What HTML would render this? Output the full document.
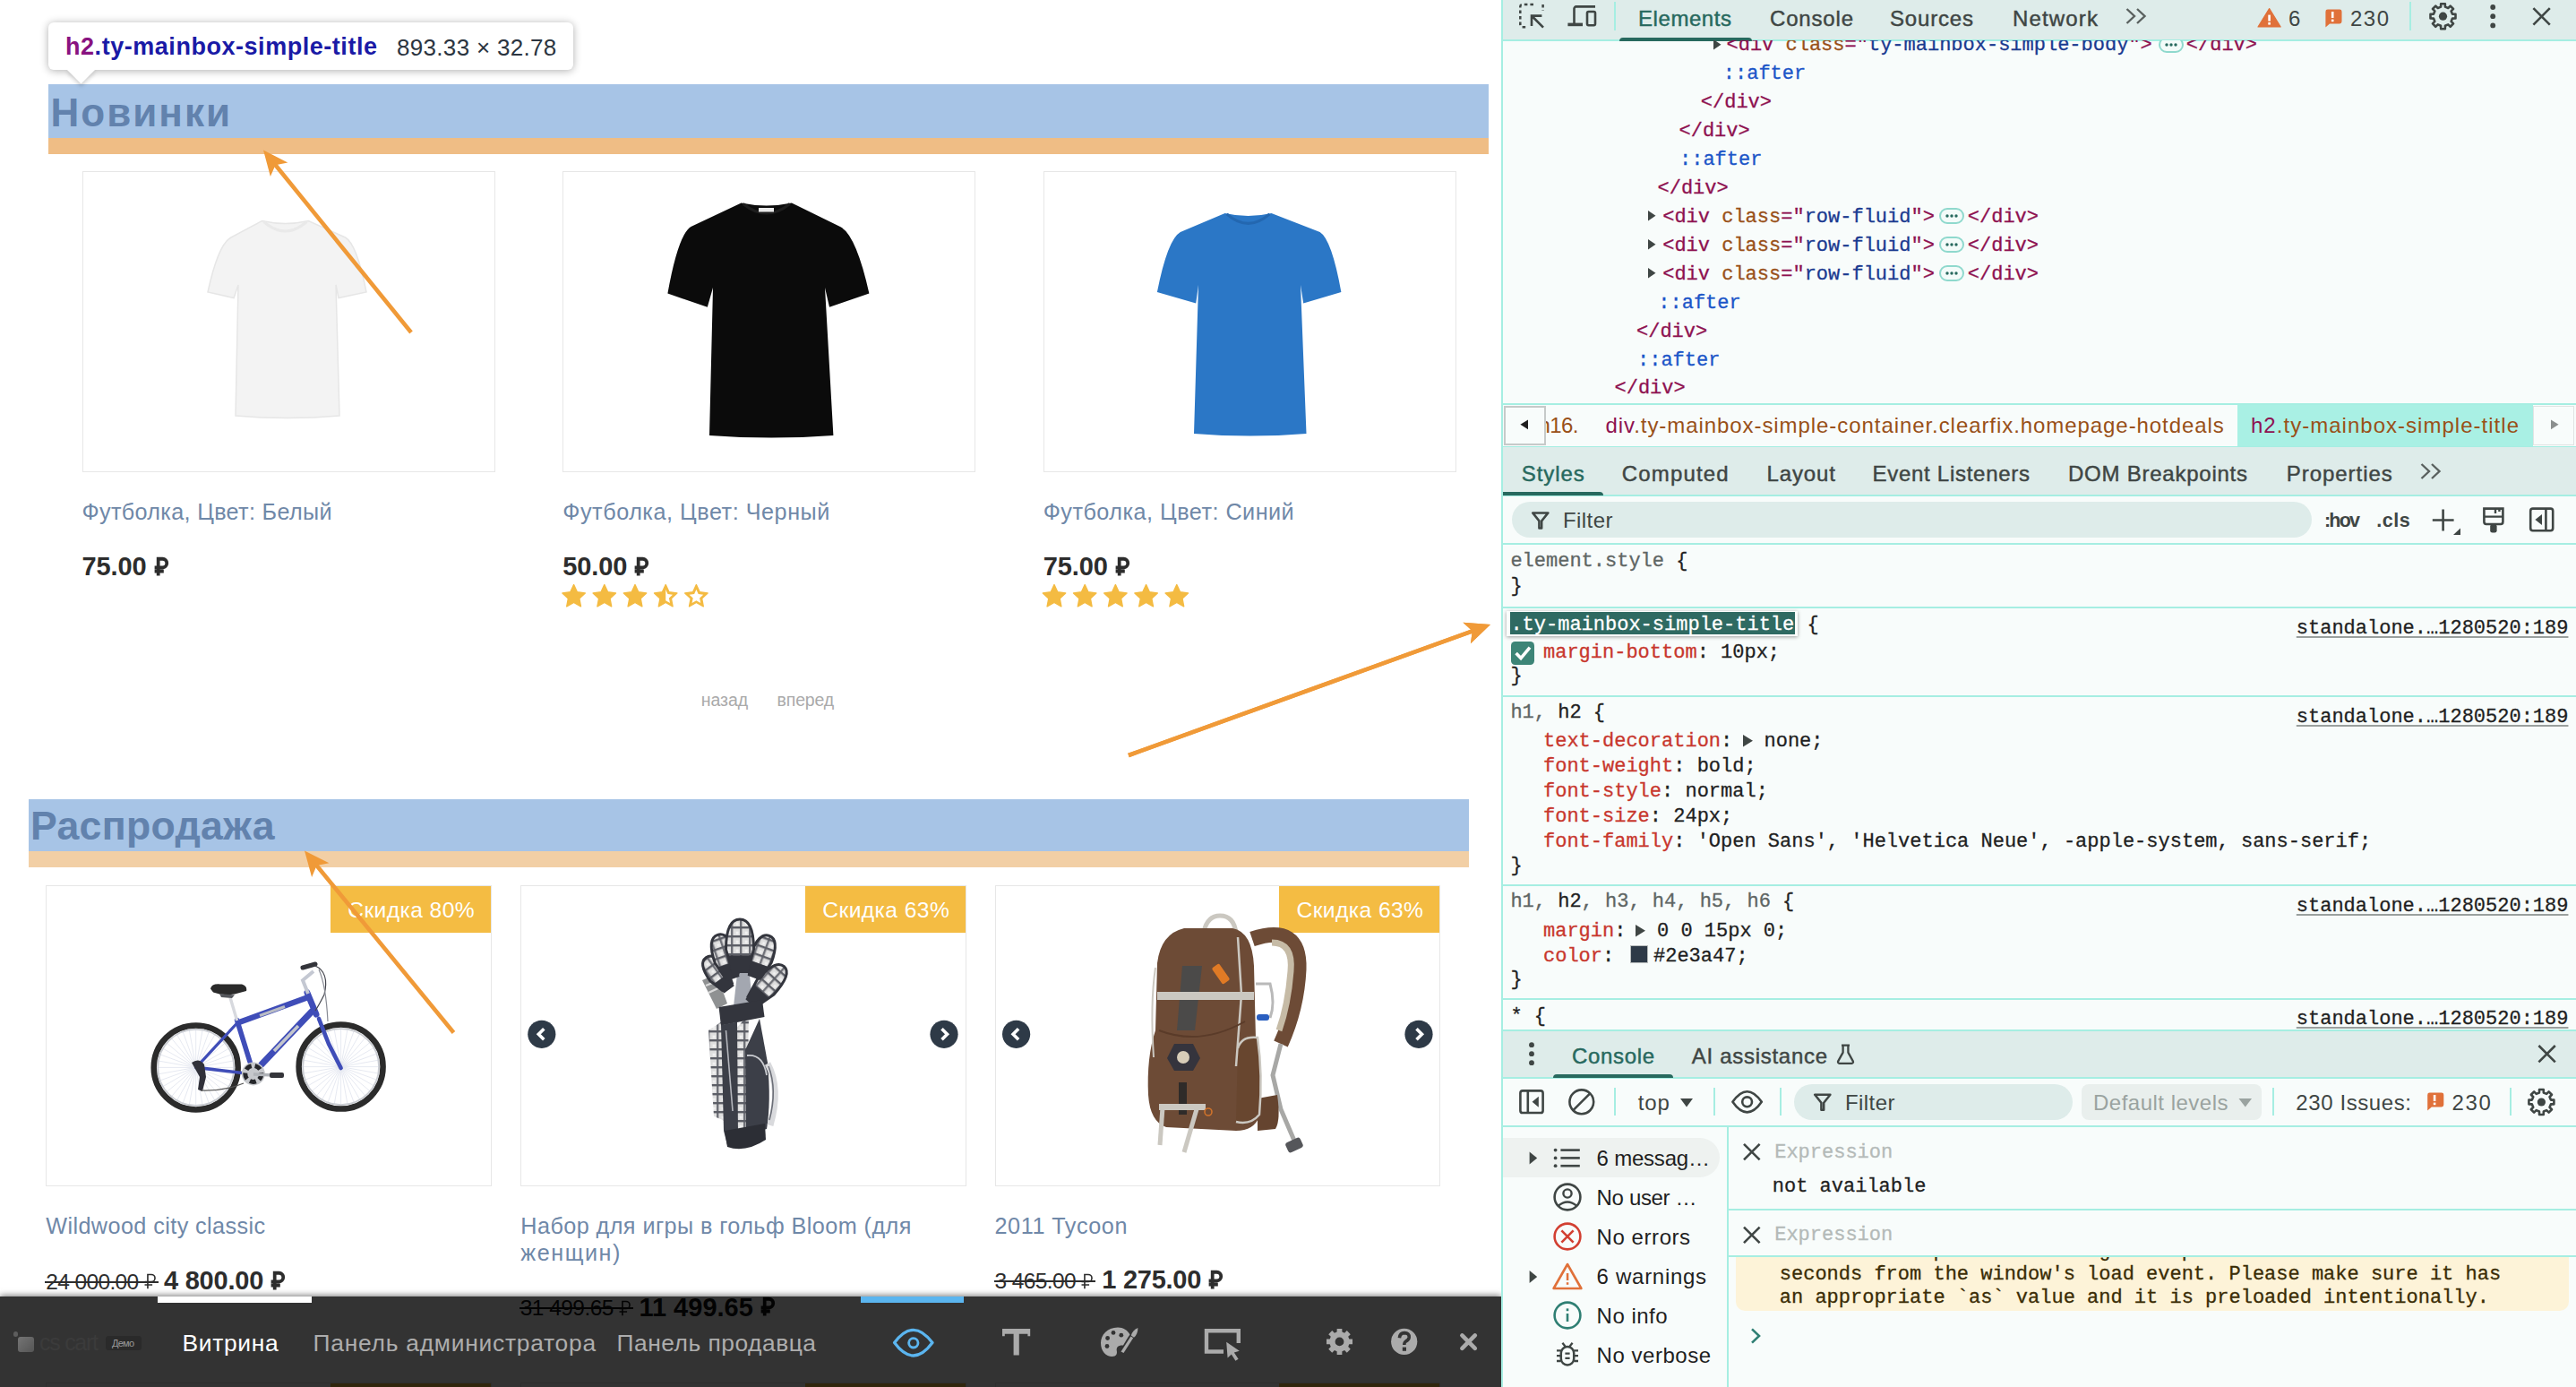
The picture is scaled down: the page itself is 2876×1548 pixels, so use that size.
<!DOCTYPE html>
<html><head><meta charset="utf-8"><title>page</title><style>html,body{margin:0;padding:0;background:#fff;}body{width:2876px;height:1548px;position:relative;overflow:hidden;font-family:"Liberation Sans",sans-serif;}.t{position:absolute;white-space:pre;font-weight:400}.s{font-family:"Liberation Sans",sans-serif}.m{font-family:"Liberation Mono",monospace;-webkit-text-stroke:0.3px}</style></head><body><div style="position:absolute;left:54.00px;top:94.00px;width:1608.00px;height:60.00px;background:#a7c4e6;"></div><div style="position:absolute;left:54.00px;top:154.00px;width:1608.00px;height:18.00px;background:#efbd85;"></div><span id="t1" class="t s" style="left:56.50px;top:96.85px;line-height:57px;font-size:44.00px;font-weight:700;color:#6282ad;letter-spacing:2.016px;">Новинки</span><div style="position:absolute;left:91.5px;top:191px;width:461px;height:336px;border:1.5px solid #e7e7e7;box-sizing:border-box"></div><div style="position:absolute;left:628.3px;top:191px;width:461px;height:336px;border:1.5px solid #e7e7e7;box-sizing:border-box"></div><div style="position:absolute;left:1164.7px;top:191px;width:461px;height:336px;border:1.5px solid #e7e7e7;box-sizing:border-box"></div><span id="t2" class="t s" style="left:91.50px;top:555.17px;line-height:33px;font-size:25.20px;color:#6f88a8;letter-spacing:0.328px;">Футболка, Цвет: Белый</span><span id="t3" class="t s" style="left:628.30px;top:555.17px;line-height:33px;font-size:25.20px;color:#6f88a8;letter-spacing:0.535px;">Футболка, Цвет: Черный</span><span id="t4" class="t s" style="left:1164.70px;top:555.17px;line-height:33px;font-size:25.20px;color:#6f88a8;letter-spacing:0.491px;">Футболка, Цвет: Синий</span><span id="t5" class="t s" style="left:91.50px;top:612.95px;line-height:38px;font-size:29.00px;font-weight:700;color:#2d2d2d;letter-spacing:-0.106px;">75.00 <svg width="15.9" height="20.4" viewBox="0 0 15.6 20" style="display:inline-block;vertical-align:baseline;overflow:visible"><path d="M4.6 20 V1.7 H9.3 a4.7 4.7 0 0 1 0 9.4 H0.6 M0.6 15.2 H10.6" fill="none" stroke="#2d2d2d" stroke-width="3.7"/></svg></span><span id="t6" class="t s" style="left:628.30px;top:612.95px;line-height:38px;font-size:29.00px;font-weight:700;color:#2d2d2d;letter-spacing:-0.106px;">50.00 <svg width="15.9" height="20.4" viewBox="0 0 15.6 20" style="display:inline-block;vertical-align:baseline;overflow:visible"><path d="M4.6 20 V1.7 H9.3 a4.7 4.7 0 0 1 0 9.4 H0.6 M0.6 15.2 H10.6" fill="none" stroke="#2d2d2d" stroke-width="3.7"/></svg></span><span id="t7" class="t s" style="left:1164.70px;top:612.95px;line-height:38px;font-size:29.00px;font-weight:700;color:#2d2d2d;letter-spacing:-0.106px;">75.00 <svg width="15.9" height="20.4" viewBox="0 0 15.6 20" style="display:inline-block;vertical-align:baseline;overflow:visible"><path d="M4.6 20 V1.7 H9.3 a4.7 4.7 0 0 1 0 9.4 H0.6 M0.6 15.2 H10.6" fill="none" stroke="#2d2d2d" stroke-width="3.7"/></svg></span><span id="t8" class="t s" style="left:782.70px;top:769.24px;line-height:25px;font-size:19.50px;color:#aaaaaa;letter-spacing:-0.016px;">назад</span><span id="t9" class="t s" style="left:867.50px;top:769.24px;line-height:25px;font-size:19.50px;color:#aaaaaa;letter-spacing:-0.141px;">вперед</span><div style="position:absolute;left:32.00px;top:892.00px;width:1608.00px;height:57.50px;background:#a7c4e6;"></div><div style="position:absolute;left:32.00px;top:949.50px;width:1608.00px;height:18.00px;background:#f2cfa5;"></div><span id="t10" class="t s" style="left:34.00px;top:892.85px;line-height:58px;font-size:44.60px;font-weight:700;color:#6282ad;letter-spacing:0.316px;">Распродажа</span><div style="position:absolute;left:51.2px;top:988px;width:497.5px;height:335.5px;border:1.5px solid #e7e7e7;box-sizing:border-box"></div><div style="position:absolute;left:368.90px;top:989.30px;width:179.30px;height:51.50px;background:#f4bc43;"></div><div style="position:absolute;left:581.3px;top:988px;width:497.5px;height:335.5px;border:1.5px solid #e7e7e7;box-sizing:border-box"></div><div style="position:absolute;left:899.00px;top:989.30px;width:179.30px;height:51.50px;background:#f4bc43;"></div><div style="position:absolute;left:1110.5px;top:988px;width:497.5px;height:335.5px;border:1.5px solid #e7e7e7;box-sizing:border-box"></div><div style="position:absolute;left:1428.20px;top:989.30px;width:179.30px;height:51.50px;background:#f4bc43;"></div><span id="t11" class="t s" style="left:388.20px;top:999.78px;line-height:32px;font-size:24.60px;color:#ffffff;letter-spacing:0.427px;">Скидка 80%</span><span id="t12" class="t s" style="left:918.30px;top:999.78px;line-height:32px;font-size:24.60px;color:#ffffff;letter-spacing:0.427px;">Скидка 63%</span><span id="t13" class="t s" style="left:1447.50px;top:999.78px;line-height:32px;font-size:24.60px;color:#ffffff;letter-spacing:0.427px;">Скидка 63%</span><span id="t14" class="t s" style="left:51.20px;top:1352.27px;line-height:33px;font-size:25.20px;color:#6f88a8;letter-spacing:0.423px;">Wildwood city classic</span><span id="t15" class="t s" style="left:581.30px;top:1352.27px;line-height:33px;font-size:25.20px;color:#6f88a8;letter-spacing:0.442px;">Набор для игры в гольф Bloom (для</span><span id="t16" class="t s" style="left:581.30px;top:1382.27px;line-height:33px;font-size:25.20px;color:#6f88a8;letter-spacing:1.523px;">женщин)</span><span id="t17" class="t s" style="left:1110.50px;top:1352.27px;line-height:33px;font-size:25.20px;color:#6f88a8;letter-spacing:0.608px;">2011 Tycoon</span><span id="t18" class="t s" style="left:51.30px;top:1414.51px;line-height:32px;font-size:24.50px;color:#2d2d2d;letter-spacing:-0.634px;">24 000.00 <svg width="13.4" height="17.2" viewBox="0 0 15.6 20" style="display:inline-block;vertical-align:baseline;overflow:visible"><path d="M4.6 20 V1.7 H9.3 a4.7 4.7 0 0 1 0 9.4 H0.6 M0.6 15.2 H10.6" fill="none" stroke="#2d2d2d" stroke-width="1.9"/></svg></span><div style="position:absolute;left:50.30px;top:1429.70px;width:126.50px;height:2.00px;background:#2d2d2d;"></div><span id="t19" class="t s" style="left:183.00px;top:1409.95px;line-height:38px;font-size:29.00px;font-weight:700;color:#2d2d2d;letter-spacing:-0.230px;">4 800.00 <svg width="15.9" height="20.4" viewBox="0 0 15.6 20" style="display:inline-block;vertical-align:baseline;overflow:visible"><path d="M4.6 20 V1.7 H9.3 a4.7 4.7 0 0 1 0 9.4 H0.6 M0.6 15.2 H10.6" fill="none" stroke="#2d2d2d" stroke-width="3.7"/></svg></span><span id="t20" class="t s" style="left:1110.50px;top:1414.01px;line-height:32px;font-size:24.50px;color:#2d2d2d;letter-spacing:-0.597px;">3 465.00 <svg width="13.4" height="17.2" viewBox="0 0 15.6 20" style="display:inline-block;vertical-align:baseline;overflow:visible"><path d="M4.6 20 V1.7 H9.3 a4.7 4.7 0 0 1 0 9.4 H0.6 M0.6 15.2 H10.6" fill="none" stroke="#2d2d2d" stroke-width="1.9"/></svg></span><div style="position:absolute;left:1109.50px;top:1429.20px;width:113.80px;height:2.00px;background:#2d2d2d;"></div><span id="t21" class="t s" style="left:1230.30px;top:1409.45px;line-height:38px;font-size:29.00px;font-weight:700;color:#2d2d2d;letter-spacing:-0.268px;">1 275.00 <svg width="15.9" height="20.4" viewBox="0 0 15.6 20" style="display:inline-block;vertical-align:baseline;overflow:visible"><path d="M4.6 20 V1.7 H9.3 a4.7 4.7 0 0 1 0 9.4 H0.6 M0.6 15.2 H10.6" fill="none" stroke="#2d2d2d" stroke-width="3.7"/></svg></span><span id="t22" class="t s" style="left:580.80px;top:1444.21px;line-height:32px;font-size:24.50px;color:#111;letter-spacing:-0.556px;">31 499.65 <svg width="13.4" height="17.2" viewBox="0 0 15.6 20" style="display:inline-block;vertical-align:baseline;overflow:visible"><path d="M4.6 20 V1.7 H9.3 a4.7 4.7 0 0 1 0 9.4 H0.6 M0.6 15.2 H10.6" fill="none" stroke="#111" stroke-width="1.9"/></svg></span><div style="position:absolute;left:579.80px;top:1459.40px;width:127.20px;height:2.00px;background:#111;"></div><span id="t23" class="t s" style="left:713.40px;top:1439.65px;line-height:38px;font-size:29.00px;font-weight:700;color:#111;letter-spacing:0.003px;">11 499.65 <svg width="15.9" height="20.4" viewBox="0 0 15.6 20" style="display:inline-block;vertical-align:baseline;overflow:visible"><path d="M4.6 20 V1.7 H9.3 a4.7 4.7 0 0 1 0 9.4 H0.6 M0.6 15.2 H10.6" fill="none" stroke="#111" stroke-width="3.7"/></svg></span><div style="position:absolute;left:51.2px;top:1542.5px;width:497.5px;height:40px;border:1.5px solid #e7e7e7;box-sizing:border-box"></div><div style="position:absolute;left:368.90px;top:1543.50px;width:179.30px;height:10.00px;background:#f4bc43;"></div><div style="position:absolute;left:581.3px;top:1542.5px;width:497.5px;height:40px;border:1.5px solid #e7e7e7;box-sizing:border-box"></div><div style="position:absolute;left:899.00px;top:1543.50px;width:179.30px;height:10.00px;background:#f4bc43;"></div><div style="position:absolute;left:1110.5px;top:1542.5px;width:497.5px;height:40px;border:1.5px solid #e7e7e7;box-sizing:border-box"></div><div style="position:absolute;left:1428.20px;top:1543.50px;width:179.30px;height:10.00px;background:#f4bc43;"></div><svg style="position:absolute;left:0;top:0" width="1676" height="1548" viewBox="0 0 1676 1548"><path d="M292.5,246.5 Q318.4,252.5 344.4,246.5 L385.5,265.0 Q398.4,272.3 409.0,326.0 L378.0,332.5 L375.0,318.0 L379.0,464.0 Q321.0,469.0 263.0,464.0 L266.0,318.0 L261.0,332.5 L232.0,326.0 Q243.7,272.3 258.0,265.0 Z" fill="#f3f3f3" stroke="#e6e6e6" stroke-width="1.5"/><path d="M294.5,247.5 Q318.4,268.5 342.4,247.5" fill="none" stroke="#e9e9e9" stroke-width="3"/><path d="M827.6,226.5 Q855.8,232.5 883.9,226.5 L938.0,253.0 Q955.8,262.0 970.4,327.6 L926.0,342.7 L921.0,321.0 L930.4,486.0 Q861.2,491.0 792.0,486.0 L796.0,321.0 L789.8,342.7 L745.4,327.6 Q757.1,262.0 771.4,253.0 Z" fill="#0b0b0b"/><path d="M829.6,227.5 Q855.8,248.5 881.9,227.5" fill="none" stroke="#1d1d1d" stroke-width="3"/><rect x="847" y="232" width="17" height="4.5" fill="#e9e9e9"/><path d="M1367.6,237.9 Q1393.5,243.9 1419.5,237.9 L1473.6,259.0 Q1486.7,267.0 1497.4,326.0 L1455.2,338.4 L1452.0,318.0 L1458.5,484.0 Q1395.8,489.0 1333.0,484.0 L1338.0,318.0 L1335.2,338.4 L1291.9,326.0 Q1303.6,267.0 1317.9,259.0 Z" fill="#2b77c6"/><path d="M1369.6,238.9 Q1393.5,259.9 1417.5,238.9" fill="none" stroke="#2367b0" stroke-width="3"/><polygon points="640.6,652.6 644.4,660.7 653.3,661.9 646.8,668.0 648.5,676.8 640.6,672.5 632.7,676.8 634.4,668.0 627.9,661.9 636.8,660.7" fill="#f4bb42" stroke="#f4bb42" stroke-width="1.4" stroke-linejoin="round"/><polygon points="674.8,652.6 678.6,660.7 687.5,661.9 681.0,668.0 682.7,676.8 674.8,672.5 666.9,676.8 668.6,668.0 662.1,661.9 671.0,660.7" fill="#f4bb42" stroke="#f4bb42" stroke-width="1.4" stroke-linejoin="round"/><polygon points="709.0,652.6 712.8,660.7 721.7,661.9 715.2,668.0 716.9,676.8 709.0,672.5 701.1,676.8 702.8,668.0 696.3,661.9 705.2,660.7" fill="#f4bb42" stroke="#f4bb42" stroke-width="1.4" stroke-linejoin="round"/><polygon points="743.2,652.6 747.0,660.7 755.9,661.9 749.4,668.0 751.1,676.8 743.2,672.5 735.3,676.8 737.0,668.0 730.5,661.9 739.4,660.7" fill="#f4bb42" stroke="#f4bb42" stroke-width="1.4" stroke-linejoin="round"/><polygon points="743.2,658.1 745.5,663.1 751.0,663.8 746.9,667.5 748.0,672.9 743.2,670.2 738.4,672.9 739.5,667.5 735.4,663.8 740.9,663.1" fill="#fff"/><clipPath id="hc743"><rect x="730.2" y="651.0" width="13" height="30"/></clipPath><polygon points="743.2,652.6 747.0,660.7 755.9,661.9 749.4,668.0 751.1,676.8 743.2,672.5 735.3,676.8 737.0,668.0 730.5,661.9 739.4,660.7" fill="#f4bb42" clip-path="url(#hc743)"/><polygon points="777.4,652.6 781.2,660.7 790.1,661.9 783.6,668.0 785.3,676.8 777.4,672.5 769.5,676.8 771.2,668.0 764.7,661.9 773.6,660.7" fill="#f4bb42" stroke="#f4bb42" stroke-width="1.4" stroke-linejoin="round"/><polygon points="777.4,658.1 779.7,663.1 785.2,663.8 781.1,667.5 782.2,672.9 777.4,670.2 772.6,672.9 773.7,667.5 769.6,663.8 775.1,663.1" fill="#fff"/><polygon points="1177.0,652.6 1180.8,660.7 1189.7,661.9 1183.2,668.0 1184.9,676.8 1177.0,672.5 1169.1,676.8 1170.8,668.0 1164.3,661.9 1173.2,660.7" fill="#f4bb42" stroke="#f4bb42" stroke-width="1.4" stroke-linejoin="round"/><polygon points="1211.2,652.6 1215.0,660.7 1223.9,661.9 1217.4,668.0 1219.1,676.8 1211.2,672.5 1203.3,676.8 1205.0,668.0 1198.5,661.9 1207.4,660.7" fill="#f4bb42" stroke="#f4bb42" stroke-width="1.4" stroke-linejoin="round"/><polygon points="1245.4,652.6 1249.2,660.7 1258.1,661.9 1251.6,668.0 1253.3,676.8 1245.4,672.5 1237.5,676.8 1239.2,668.0 1232.7,661.9 1241.6,660.7" fill="#f4bb42" stroke="#f4bb42" stroke-width="1.4" stroke-linejoin="round"/><polygon points="1279.6,652.6 1283.4,660.7 1292.3,661.9 1285.8,668.0 1287.5,676.8 1279.6,672.5 1271.7,676.8 1273.4,668.0 1266.9,661.9 1275.8,660.7" fill="#f4bb42" stroke="#f4bb42" stroke-width="1.4" stroke-linejoin="round"/><polygon points="1313.8,652.6 1317.6,660.7 1326.5,661.9 1320.0,668.0 1321.7,676.8 1313.8,672.5 1305.9,676.8 1307.6,668.0 1301.1,661.9 1310.0,660.7" fill="#f4bb42" stroke="#f4bb42" stroke-width="1.4" stroke-linejoin="round"/><path d="M260.7,1191.4 L176.7,1191.4 M260.1,1198.7 L177.3,1184.1 M258.2,1205.8 L179.2,1177.0 M255.1,1212.4 L182.3,1170.4 M250.9,1218.4 L186.5,1164.4 M245.7,1223.6 L191.7,1159.2 M239.7,1227.8 L197.7,1155.0 M233.1,1230.9 L204.3,1151.9 M226.0,1232.8 L211.4,1150.0 M218.7,1233.4 L218.7,1149.4 M211.4,1232.8 L226.0,1150.0 M204.3,1230.9 L233.1,1151.9 M197.7,1227.8 L239.7,1155.0 M191.7,1223.6 L245.7,1159.2 M186.5,1218.4 L250.9,1164.4 M182.3,1212.4 L255.1,1170.4 M179.2,1205.8 L258.2,1177.0 M177.3,1198.7 L260.1,1184.1 " stroke="#dfe3ee" stroke-width="0.8" fill="none"/><circle cx="218.7" cy="1191.4" r="47" fill="none" stroke="#2b2b2b" stroke-width="6.5"/><circle cx="218.7" cy="1191.4" r="42.5" fill="none" stroke="#c9ccd2" stroke-width="1.8"/><path d="M422.6,1190.6 L338.6,1190.6 M422.0,1197.9 L339.2,1183.3 M420.1,1205.0 L341.1,1176.2 M417.0,1211.6 L344.2,1169.6 M412.8,1217.6 L348.4,1163.6 M407.6,1222.8 L353.6,1158.4 M401.6,1227.0 L359.6,1154.2 M395.0,1230.1 L366.2,1151.1 M387.9,1232.0 L373.3,1149.2 M380.6,1232.6 L380.6,1148.6 M373.3,1232.0 L387.9,1149.2 M366.2,1230.1 L395.0,1151.1 M359.6,1227.0 L401.6,1154.2 M353.6,1222.8 L407.6,1158.4 M348.4,1217.6 L412.8,1163.6 M344.2,1211.6 L417.0,1169.6 M341.1,1205.0 L420.1,1176.2 M339.2,1197.9 L422.0,1183.3 " stroke="#dfe3ee" stroke-width="0.8" fill="none"/><circle cx="380.6" cy="1190.6" r="47" fill="none" stroke="#2b2b2b" stroke-width="6.5"/><circle cx="380.6" cy="1190.6" r="42.5" fill="none" stroke="#c9ccd2" stroke-width="1.8"/><g stroke="#3f4db8" stroke-width="4.6" stroke-linecap="round" fill="none"><path d="M264.6,1138.6 L279,1185" stroke-width="5.6"/><path d="M267,1141 L344,1113" stroke-width="6.2"/><path d="M348,1129 L292,1188" stroke-width="7.2"/><path d="M343,1108 L353,1132" stroke-width="7"/><path d="M356,1137 L367,1165 L380.6,1192" /><path d="M283,1199 L219,1191.4" stroke-width="3.6"/><path d="M264.6,1142 L219,1191.4" stroke-width="3.2"/></g><path d="M290,1133.5 L318,1123.5" stroke="#b9bcc4" stroke-width="3.4"/><path d="M333,1145 L306,1173" stroke="#c3c6cd" stroke-width="3.6"/><path d="M256,1110 L264.6,1139" stroke="#d7d9de" stroke-width="3.4"/><path d="M235,1103.5 Q236,1097.6 246,1098.4 L270,1098.6 Q276.4,1100.6 275,1106 L262,1109.6 Q248,1111.4 238,1107.6 Z" fill="#2a2a2a"/><path d="M245,1109 L262,1110.5 L259,1114 L247,1113 Z" fill="#55575c"/><path d="M344,1109 L338,1094 L350,1084" stroke="#c4c8d2" stroke-width="4" fill="none"/><path d="M338,1080 L352,1076" stroke="#33343a" stroke-width="5" stroke-linecap="round"/><path d="M352,1078 Q368,1085 362,1110 Q356,1122 352,1128" stroke="#44464e" stroke-width="1.2" fill="none"/><path d="M356,1082 Q364,1100 366,1140" stroke="#888b94" stroke-width="1.2" fill="none"/><circle cx="282.8" cy="1198.4" r="13" fill="#c6c8cc"/><circle cx="282.8" cy="1198.4" r="9" fill="none" stroke="#26272b" stroke-width="5" stroke-dasharray="7 4"/><path d="M283,1199 L306,1200" stroke="#b0b3b8" stroke-width="3.5"/><rect x="301" y="1197" width="16" height="6" rx="2" fill="#34353a"/><path d="M214,1186 q8,-6 14,2 l2,14 l-4,16 l-5,-2 l2,-14 z" fill="#30313a"/><path d="M224,1217 Q250,1218 272,1209" stroke="#555" stroke-width="1.2" fill="none"/><defs><pattern id="plaid" width="10" height="10" patternUnits="userSpaceOnUse"><rect width="10" height="10" fill="#dedede"/><rect width="10" height="2.4" fill="#5c5e66"/><rect width="2.4" height="10" fill="#5c5e66" opacity=".85"/><rect x="5.6" y="5.6" width="3" height="3" fill="#f1f1f1"/></pattern></defs><path d="M819,1123 L824,1078 L836,1078 L840,1120 Z" fill="#a3a7b0"/><path d="M836,1120 L846,1088 L856,1092 L848,1120 Z" fill="#e6e6e6"/><path d="M784,1094 L800,1087 L812,1120 L800,1126 Z" fill="#8f9192"/><path d="M788,1100 L803,1094 M791,1108 L806,1101" stroke="#d9d9d9" stroke-width="2.4"/><g transform="translate(800,1085) rotate(-36)"><path d="M-11.5,4 Q-11.5,-20 0,-20 Q11.5,-20 11.5,4 L6.9,20 L-6.9,20 Z" fill="url(#plaid)" stroke="#33353d" stroke-width="3"/><path d="M-9.66,8.8 L9.66,8.8 L6.9,24 L-6.9,24 Z" fill="#33353d"/></g><g transform="translate(809,1066) rotate(-19)"><path d="M-13,4.8 Q-13,-24 0,-24 Q13,-24 13,4.8 L7.8,24 L-7.8,24 Z" fill="url(#plaid)" stroke="#33353d" stroke-width="3"/><path d="M-10.92,10.56 L10.92,10.56 L7.8,28 L-7.8,28 Z" fill="#33353d"/></g><g transform="translate(858,1098) rotate(42)"><path d="M-12.5,5.2 Q-12.5,-26 0,-26 Q12.5,-26 12.5,5.2 L7.5,26 L-7.5,26 Z" fill="url(#plaid)" stroke="#33353d" stroke-width="3"/><path d="M-10.5,11.44 L10.5,11.44 L7.5,30 L-7.5,30 Z" fill="#33353d"/></g><g transform="translate(851,1066) rotate(20)"><path d="M-12.5,4.6 Q-12.5,-23 0,-23 Q12.5,-23 12.5,4.6 L7.5,23 L-7.5,23 Z" fill="url(#plaid)" stroke="#33353d" stroke-width="3"/><path d="M-10.5,10.12 L10.5,10.12 L7.5,27 L-7.5,27 Z" fill="#33353d"/></g><g transform="translate(826,1054) rotate(0)"><path d="M-15.5,5.6 Q-15.5,-28 0,-28 Q15.5,-28 15.5,5.6 L9.3,28 L-9.3,28 Z" fill="url(#plaid)" stroke="#33353d" stroke-width="3"/><path d="M-13.02,12.32 L13.02,12.32 L9.3,32 L-9.3,32 Z" fill="#33353d"/></g><path d="M791,1150 L806,1140 L812,1252 L797,1246 Z" fill="url(#plaid)"/><path d="M820,1150 L836,1132 L834,1264 L820,1262 Z" fill="url(#plaid)"/><path d="M802.5,1124 L851,1116 L853.5,1135 L805,1144.5 Z" fill="#33353d"/><path d="M805,1144 L823,1140.5 L824,1268 L812,1278 L808,1262 Z" fill="#3c3f48"/><path d="M810.5,1150 L818,1240" stroke="#b5b7bd" stroke-width="1.6" fill="none"/><path d="M832,1172 L848,1137 L857,1186 Q861,1230 856,1260 L833,1266 Z" fill="#3c3f48"/><path d="M834,1178 Q852,1176 856,1200" stroke="#c9cbd0" stroke-width="1.8" fill="none"/><path d="M857,1187 Q872,1215 860,1256" stroke="#d9dadd" stroke-width="7" fill="none"/><path d="M858,1190 Q868,1216 859,1250" stroke="#6b6e77" stroke-width="1.6" fill="none"/><path d="M809,1262 L854,1254 L855,1272 Q832,1287 812,1280 Z" fill="#2c2e35"/><path d="M1398,1048 Q1452,1030 1450,1082 Q1448,1125 1430,1165" stroke="#6d4b36" stroke-width="17" fill="none"/><path d="M1420,1052 Q1444,1052 1441,1084 Q1438,1122 1428,1150" stroke="#c6bba6" stroke-width="7" fill="none"/><path d="M1430,1165 L1421,1200 L1430,1238 L1448,1280" stroke="#a8a8a6" stroke-width="5" fill="none"/><rect x="1436" y="1272" width="18" height="12" rx="3" fill="#55565a" transform="rotate(-25 1445 1278)"/><path d="M1404,1226 L1426,1222 Q1430,1250 1424,1260 L1404,1262 Z" fill="#65442f"/><path d="M1344,1040 Q1348,1022 1362,1022 Q1378,1022 1380,1042" stroke="#cbc8c1" stroke-width="5" fill="none"/><path d="M1292,1075 Q1296,1042 1322,1036 L1376,1036 Q1398,1040 1400,1078 L1402,1160 Q1410,1200 1406,1246 Q1400,1262 1380,1262 L1302,1258 Q1284,1252 1282,1222 Q1280,1180 1290,1150 Z" fill="#6d4b36"/><path d="M1382,1170 Q1386,1156 1404,1158 Q1410,1200 1406,1244 Q1396,1256 1380,1252" fill="#68462f" stroke="#cbc8c1" stroke-width="2.5"/><path d="M1382,1046 L1386,1110 L1380,1190" stroke="#cbc8c1" stroke-width="2.5" fill="none"/><path d="M1320,1078 L1342,1078 L1334,1150 L1314,1150 Z" fill="#4b4a49"/><rect x="1292" y="1107" width="108" height="9" fill="#cbc8c1"/><path d="M1294,1150 Q1340,1168 1390,1140" stroke="#5a3b29" stroke-width="2" fill="none"/><rect x="1358" y="1076" width="10" height="22" rx="2" fill="#e07a25" transform="rotate(-35 1363 1087)"/><polygon points="1303,1181 1311,1165 1332,1165 1340,1181 1332,1195 1311,1195" fill="#35343d"/><circle cx="1321" cy="1180" r="7" fill="#d8cdb8"/><rect x="1316" y="1208" width="9" height="36" fill="#2f2b29"/><rect x="1294" y="1232" width="52" height="7" fill="#cbc8c1"/><path d="M1298,1236 L1295,1278" stroke="#cbc8c1" stroke-width="5"/><path d="M1336,1238 L1322,1286" stroke="#cbc8c1" stroke-width="5"/><circle cx="1349" cy="1241" r="4" fill="none" stroke="#d0732b" stroke-width="1.6"/><path d="M1290,1080 Q1284,1120 1288,1180" stroke="#cbc8c1" stroke-width="2" fill="none"/><path d="M1402,1098 L1418,1098 Q1424,1120 1418,1136" stroke="#b9b9b9" stroke-width="3" fill="none"/><rect x="1403" y="1132" width="14" height="7" rx="3" fill="#2a5fc0"/><circle cx="604.8" cy="1154.3" r="15.6" fill="#2e3a47"/><path d="M607.3,1148.3 l-6,6 l6,6" fill="none" stroke="#fff" stroke-width="3.6"/><circle cx="1054.0" cy="1154.3" r="15.6" fill="#2e3a47"/><path d="M1051.5,1148.3 l6,6 l-6,6" fill="none" stroke="#fff" stroke-width="3.6"/><circle cx="1134.6" cy="1154.3" r="15.6" fill="#2e3a47"/><path d="M1137.1,1148.3 l-6,6 l6,6" fill="none" stroke="#fff" stroke-width="3.6"/><circle cx="1584.0" cy="1154.3" r="15.6" fill="#2e3a47"/><path d="M1581.5,1148.3 l6,6 l-6,6" fill="none" stroke="#fff" stroke-width="3.6"/><line x1="459.0" y1="371.0" x2="306.6" y2="183.0" stroke="#f09a38" stroke-width="4.6"/><polygon points="294.0,167.5 321.3,181.4 307.5,184.2 301.9,197.1" fill="#f09a38"/><line x1="1260.0" y1="843.0" x2="1645.2" y2="703.8" stroke="#f09a38" stroke-width="4.6"/><polygon points="1664.0,697.0 1641.9,718.3 1643.8,704.3 1633.4,694.8" fill="#f09a38"/><line x1="506.5" y1="1152.5" x2="352.7" y2="965.0" stroke="#f09a38" stroke-width="4.6"/><polygon points="340.0,949.5 367.4,963.2 353.6,966.1 348.1,979.1" fill="#f09a38"/></svg><div style="position:absolute;left:54px;top:24.5px;width:586px;height:53px;background:#fff;border-radius:6px;box-shadow:0 1px 10px rgba(0,0,0,.32)"></div><svg style="position:absolute;left:74.00px;top:76.50px;overflow:visible;filter:drop-shadow(0 3px 2px rgba(0,0,0,.18));" width="33.00" height="17.00" viewBox="0 0 33 17"><polygon points="0,0 33,0 16.5,16.5" fill="#fff"/></svg><div style="position:absolute;left:70.00px;top:70.00px;width:42.00px;height:7.50px;background:#fff;"></div><span id="t24" class="t s" style="left:73.00px;top:34.74px;line-height:35px;font-size:27.00px;font-weight:700;color:#1a1aa6;letter-spacing:0.537px;"><span style="color:#881280">h2</span>.ty-mainbox-simple-title</span><span id="t25" class="t s" style="left:443.00px;top:35.59px;line-height:34px;font-size:26.00px;color:#2b3440;letter-spacing:0.314px;">893.33 × 32.78</span><div style="position:absolute;left:0;top:1447px;width:1676px;height:101px;background:rgba(0,0,0,.80);box-shadow:0 -1px 7px rgba(0,0,0,.55)"></div><div style="position:absolute;left:176.00px;top:1447.00px;width:172.00px;height:7.20px;background:#ffffff;"></div><div style="position:absolute;left:960.50px;top:1447.00px;width:115.50px;height:7.20px;background:#5bb5ef;"></div><div style="position:absolute;left:19.6px;top:1491.6px;width:18px;height:17.2px;border-radius:3px;background:linear-gradient(135deg,#757575,#555)"></div><div style="position:absolute;left:14.6px;top:1486.2px;width:5.6px;height:5.6px;border-radius:3px;background:#5d5d5d"></div><span id="t26" class="t s" style="left:44.00px;top:1482.34px;line-height:32px;font-size:25.00px;color:#3b3b3b;letter-spacing:-1.271px;">cs cart</span><div style="position:absolute;left:118px;top:1490.8px;width:39.8px;height:16.4px;border-radius:3.5px;background:#2a2a2a"></div><span id="t27" class="t s" style="left:125.00px;top:1492.39px;line-height:14px;font-size:11.00px;color:#9b9b9b;letter-spacing:-0.750px;">Демо</span><span id="t28" class="t s" style="left:203.60px;top:1481.75px;line-height:34px;font-size:26.40px;color:#ffffff;letter-spacing:0.648px;">Витрина</span><span id="t29" class="t s" style="left:349.60px;top:1481.75px;line-height:34px;font-size:26.40px;color:#adadad;letter-spacing:0.741px;">Панель администратора</span><span id="t30" class="t s" style="left:688.50px;top:1481.75px;line-height:34px;font-size:26.40px;color:#adadad;letter-spacing:0.502px;">Панель продавца</span><svg style="position:absolute;left:0;top:0" width="1676" height="1548" viewBox="0 0 1676 1548"><path d="M998.6,1498.6 Q1019.8,1470 1041,1498.6 Q1019.8,1527.4 998.6,1498.6 Z" fill="none" stroke="#5bb5ef" stroke-width="3.3" stroke-linejoin="round"/><circle cx="1019.8" cy="1498.8" r="5.2" fill="none" stroke="#5bb5ef" stroke-width="2.8"/><path d="M1119,1483 H1150.2 V1491.2 H1147.4 V1488.8 H1137.8 V1512.5 H1131.6 V1488.8 H1121.8 V1491.2 H1119 Z" fill="#ababab"/><path d="M1248,1481.5 C1236,1481.5 1229,1490 1229,1499 C1229,1508 1235,1514 1241.5,1514 C1246.5,1514 1247.5,1510.5 1246.8,1507.5 C1246,1503.5 1249,1501.5 1252.5,1501.5 L1254,1501.5 C1256,1498 1259,1493 1261.5,1489.5 C1259,1484.5 1254,1481.5 1248,1481.5 Z" fill="#ababab"/><circle cx="1236.6" cy="1493.5" r="2.4" fill="#333"/><circle cx="1243.0" cy="1487.4" r="2.4" fill="#333"/><circle cx="1251.8" cy="1490.2" r="2.4" fill="#333"/><circle cx="1236.0" cy="1502.5" r="2.4" fill="#333"/><path d="M1251.5,1508.5 L1262.5,1491.5 L1265.2,1493.2 L1254.5,1510 Z" fill="#ababab"/><path d="M1262.8,1490.6 Q1264.5,1484.5 1270.4,1482 Q1270.5,1489 1266,1492.8 Z" fill="#ababab"/><path d="M1366,1508.5 H1347 V1485.2 H1382.8 V1499" fill="none" stroke="#ababab" stroke-width="4.4"/><path d="M1369.2,1497.8 L1383.8,1507.8 L1377.8,1509.4 L1382.6,1516.8 L1379.4,1518.8 L1374.8,1511.4 L1370.6,1515.4 Z" fill="#ababab"/><path d="M1506.32,1494.50 L1510.02,1494.55 L1510.02,1500.25 L1506.32,1500.30 L1505.20,1503.00 L1507.78,1505.66 L1503.76,1509.68 L1501.10,1507.10 L1498.40,1508.22 L1498.35,1511.92 L1492.65,1511.92 L1492.60,1508.22 L1489.90,1507.10 L1487.24,1509.68 L1483.22,1505.66 L1485.80,1503.00 L1484.68,1500.30 L1480.98,1500.25 L1480.98,1494.55 L1484.68,1494.50 L1485.80,1491.80 L1483.22,1489.14 L1487.24,1485.12 L1489.90,1487.70 L1492.60,1486.58 L1492.65,1482.88 L1498.35,1482.88 L1498.40,1486.58 L1501.10,1487.70 L1503.76,1485.12 L1507.78,1489.14 L1505.20,1491.80 Z M1490.60,1497.40 a4.90,4.90 0 1,0 9.80,0 a4.90,4.90 0 1,0 -9.80,0 Z" fill="#ababab" fill-rule="evenodd"/><circle cx="1567.7" cy="1497.4" r="14.6" fill="#ababab"/><path d="M1562.4,1493.2 Q1563,1487.6 1568,1487.6 Q1573.4,1487.8 1573.2,1492.4 Q1573,1495.4 1569.6,1497 Q1567.8,1498 1567.8,1501" fill="none" stroke="#333" stroke-width="3.6"/><rect x="1565.8" y="1503.6" width="4.2" height="4.2" fill="#333"/><path d="M1632.4,1490.4 L1646.8,1504.8 M1646.8,1490.4 L1632.4,1504.8" stroke="#ababab" stroke-width="4.6" stroke-linecap="round"/></svg><div style="position:absolute;left:1676.00px;top:0.00px;width:1200.00px;height:1548.00px;background:#f8fcfb;"></div><div style="position:absolute;left:1678.00px;top:0.00px;width:1198.00px;height:44.60px;background:#deecea;"></div><div style="position:absolute;left:1678.00px;top:43.60px;width:1198.00px;height:2.00px;background:#a6eee2;"></div><div style="position:absolute;left:1802.00px;top:2.00px;width:2.00px;height:31.50px;background:#a6eee2;"></div><span id="t31" class="t s" style="left:1829.00px;top:4.58px;line-height:31px;font-size:24.00px;color:#27695e;letter-spacing:0.565px;-webkit-text-stroke:0.45px #27695e;">Elements</span><div style="position:absolute;left:1808px;top:41.6px;width:147.5px;height:4px;background:#27695e;border-radius:4px 4px 0 0"></div><span id="t32" class="t s" style="left:1976.00px;top:4.58px;line-height:31px;font-size:24.00px;color:#3f4644;letter-spacing:0.823px;-webkit-text-stroke:0.45px #3f4644;">Console</span><span id="t33" class="t s" style="left:2110.00px;top:4.58px;line-height:31px;font-size:24.00px;color:#3f4644;letter-spacing:0.826px;-webkit-text-stroke:0.45px #3f4644;">Sources</span><span id="t34" class="t s" style="left:2247.00px;top:4.58px;line-height:31px;font-size:24.00px;color:#3f4644;letter-spacing:1.161px;-webkit-text-stroke:0.45px #3f4644;">Network</span><svg style="position:absolute;left:2372.50px;top:9.40px;overflow:visible;" width="24.00" height="18.00" viewBox="0 0 24 18"><path d="M1.5,1 L10,9 L1.5,17 M13,1 L21.5,9 L13,17" fill="none" stroke="#5a615f" stroke-width="2.4"/></svg><span id="t35" class="t s" style="left:2555.00px;top:5.38px;line-height:31px;font-size:24.00px;color:#3f4644;letter-spacing:0.641px;">6</span><span id="t36" class="t s" style="left:2624.00px;top:5.38px;line-height:31px;font-size:24.00px;color:#3f4644;letter-spacing:1.477px;">230</span><div style="position:absolute;left:2689.80px;top:2.00px;width:2.00px;height:31.50px;background:#a6eee2;"></div><div style="position:absolute;left:1678px;top:45.4px;width:1198px;height:405px;overflow:hidden"><svg style="position:absolute;left:235.00px;top:-1.65px;overflow:visible;" width="8.50" height="11.50" viewBox="0 0 8.5 11.5"><polygon points="0,0 8.5,5.75 0,11.5" fill="#3f4644"/></svg><span id="t37" class="t m" style="left:249.50px;top:-9.32px;line-height:29px;font-size:22.00px;color:#8e1150;">&lt;div <span style="color:#995018">class</span>=&quot;<span style="color:#1a3a90">ty-mainbox-simple-body</span>&quot;&gt;</span><div style="position:absolute;left:731.5px;top:-4.6px;width:28px;height:18.4px;border:2px solid #8fd9cd;border-radius:10px;box-sizing:border-box;background:#f3fbf9"></div><svg style="position:absolute;left:738.50px;top:2.60px;overflow:visible;" width="14.00" height="4.00" viewBox="0 0 14 4"><circle cx="2" cy="2" r="1.7" fill="#27695e"/><circle cx="7" cy="2" r="1.7" fill="#27695e"/><circle cx="12" cy="2" r="1.7" fill="#27695e"/></svg><span id="t38" class="t m" style="left:762.80px;top:-9.32px;line-height:29px;font-size:22.00px;color:#8e1150;">&lt;/div&gt;</span><span id="t39" class="t m" style="left:245.80px;top:22.63px;line-height:29px;font-size:22.00px;color:#1b55c8;">::after</span><span id="t40" class="t m" style="left:220.80px;top:54.58px;line-height:29px;font-size:22.00px;color:#8e1150;">&lt;/div&gt;</span><span id="t41" class="t m" style="left:196.50px;top:86.53px;line-height:29px;font-size:22.00px;color:#8e1150;">&lt;/div&gt;</span><span id="t42" class="t m" style="left:197.00px;top:118.48px;line-height:29px;font-size:22.00px;color:#1b55c8;">::after</span><span id="t43" class="t m" style="left:172.50px;top:150.43px;line-height:29px;font-size:22.00px;color:#8e1150;">&lt;/div&gt;</span><svg style="position:absolute;left:162.00px;top:189.60px;overflow:visible;" width="8.50" height="11.50" viewBox="0 0 8.5 11.5"><polygon points="0,0 8.5,5.75 0,11.5" fill="#3f4644"/></svg><span id="t44" class="t m" style="left:178.20px;top:182.38px;line-height:29px;font-size:22.00px;color:#8e1150;">&lt;div <span style="color:#995018">class</span>=&quot;<span style="color:#1a3a90">row-fluid</span>&quot;&gt;</span><div style="position:absolute;left:487.0px;top:186.7px;width:28px;height:18.4px;border:2px solid #8fd9cd;border-radius:10px;box-sizing:border-box;background:#f3fbf9"></div><svg style="position:absolute;left:494.00px;top:193.85px;overflow:visible;" width="14.00" height="4.00" viewBox="0 0 14 4"><circle cx="2" cy="2" r="1.7" fill="#27695e"/><circle cx="7" cy="2" r="1.7" fill="#27695e"/><circle cx="12" cy="2" r="1.7" fill="#27695e"/></svg><span id="t45" class="t m" style="left:518.80px;top:182.38px;line-height:29px;font-size:22.00px;color:#8e1150;">&lt;/div&gt;</span><svg style="position:absolute;left:162.00px;top:221.55px;overflow:visible;" width="8.50" height="11.50" viewBox="0 0 8.5 11.5"><polygon points="0,0 8.5,5.75 0,11.5" fill="#3f4644"/></svg><span id="t46" class="t m" style="left:178.20px;top:214.33px;line-height:29px;font-size:22.00px;color:#8e1150;">&lt;div <span style="color:#995018">class</span>=&quot;<span style="color:#1a3a90">row-fluid</span>&quot;&gt;</span><div style="position:absolute;left:487.0px;top:218.6px;width:28px;height:18.4px;border:2px solid #8fd9cd;border-radius:10px;box-sizing:border-box;background:#f3fbf9"></div><svg style="position:absolute;left:494.00px;top:225.80px;overflow:visible;" width="14.00" height="4.00" viewBox="0 0 14 4"><circle cx="2" cy="2" r="1.7" fill="#27695e"/><circle cx="7" cy="2" r="1.7" fill="#27695e"/><circle cx="12" cy="2" r="1.7" fill="#27695e"/></svg><span id="t47" class="t m" style="left:518.80px;top:214.33px;line-height:29px;font-size:22.00px;color:#8e1150;">&lt;/div&gt;</span><svg style="position:absolute;left:162.00px;top:253.50px;overflow:visible;" width="8.50" height="11.50" viewBox="0 0 8.5 11.5"><polygon points="0,0 8.5,5.75 0,11.5" fill="#3f4644"/></svg><span id="t48" class="t m" style="left:178.20px;top:246.28px;line-height:29px;font-size:22.00px;color:#8e1150;">&lt;div <span style="color:#995018">class</span>=&quot;<span style="color:#1a3a90">row-fluid</span>&quot;&gt;</span><div style="position:absolute;left:487.0px;top:250.6px;width:28px;height:18.4px;border:2px solid #8fd9cd;border-radius:10px;box-sizing:border-box;background:#f3fbf9"></div><svg style="position:absolute;left:494.00px;top:257.75px;overflow:visible;" width="14.00" height="4.00" viewBox="0 0 14 4"><circle cx="2" cy="2" r="1.7" fill="#27695e"/><circle cx="7" cy="2" r="1.7" fill="#27695e"/><circle cx="12" cy="2" r="1.7" fill="#27695e"/></svg><span id="t49" class="t m" style="left:518.80px;top:246.28px;line-height:29px;font-size:22.00px;color:#8e1150;">&lt;/div&gt;</span><span id="t50" class="t m" style="left:173.30px;top:278.23px;line-height:29px;font-size:22.00px;color:#1b55c8;">::after</span><span id="t51" class="t m" style="left:149.00px;top:310.18px;line-height:29px;font-size:22.00px;color:#8e1150;">&lt;/div&gt;</span><span id="t52" class="t m" style="left:150.00px;top:342.13px;line-height:29px;font-size:22.00px;color:#1b55c8;">::after</span><span id="t53" class="t m" style="left:124.50px;top:374.08px;line-height:29px;font-size:22.00px;color:#8e1150;">&lt;/div&gt;</span></div><div style="position:absolute;left:1678.00px;top:450.00px;width:1198.00px;height:2.00px;background:#a6eee2;"></div><div style="position:absolute;left:1678.00px;top:497.60px;width:1198.00px;height:2.00px;background:#a6eee2;"></div><span id="t54" class="t s" style="left:1717.50px;top:458.78px;line-height:31px;font-size:24.00px;color:#995018;letter-spacing:-0.573px;">h16.</span><span id="t55" class="t s" style="left:1792.50px;top:458.78px;line-height:31px;font-size:24.00px;color:#995018;letter-spacing:0.932px;"><span style="color:#8e1150">div</span>.ty-mainbox-simple-container.clearfix.homepage-hotdeals</span><div style="position:absolute;left:2497.80px;top:451.80px;width:330.40px;height:46.00px;background:#a9f0e4;"></div><span id="t56" class="t s" style="left:2513.00px;top:458.78px;line-height:31px;font-size:24.00px;color:#995018;letter-spacing:1.022px;"><span style="color:#8e1150">h2</span>.ty-mainbox-simple-title</span><div style="position:absolute;left:1679px;top:452.6px;width:46.5px;height:44.4px;background:#f8fcfb;border:2px solid #c6cac9;box-sizing:border-box"></div><div style="position:absolute;left:2828px;top:452.6px;width:46px;height:44.4px;background:#f8fcfb;border:1.6px solid #e0e4e3;box-sizing:border-box"></div><div style="position:absolute;left:1678.00px;top:499.40px;width:1198.00px;height:53.00px;background:#deecea;"></div><div style="position:absolute;left:1678.00px;top:551.80px;width:1198.00px;height:2.00px;background:#a6eee2;"></div><span id="t57" class="t s" style="left:1698.80px;top:512.58px;line-height:31px;font-size:24.00px;color:#27695e;letter-spacing:0.928px;-webkit-text-stroke:0.45px #27695e;">Styles</span><div style="position:absolute;left:1678px;top:549.4px;width:112px;height:4px;background:#27695e;border-radius:0 4px 0 0"></div><span id="t58" class="t s" style="left:1810.80px;top:512.58px;line-height:31px;font-size:24.00px;color:#3f4644;letter-spacing:1.152px;-webkit-text-stroke:0.45px #3f4644;">Computed</span><span id="t59" class="t s" style="left:1972.50px;top:512.58px;line-height:31px;font-size:24.00px;color:#3f4644;letter-spacing:0.847px;-webkit-text-stroke:0.45px #3f4644;">Layout</span><span id="t60" class="t s" style="left:2090.50px;top:512.58px;line-height:31px;font-size:24.00px;color:#3f4644;letter-spacing:0.720px;-webkit-text-stroke:0.45px #3f4644;">Event Listeners</span><span id="t61" class="t s" style="left:2309.00px;top:512.58px;line-height:31px;font-size:24.00px;color:#3f4644;letter-spacing:0.757px;-webkit-text-stroke:0.45px #3f4644;">DOM Breakpoints</span><span id="t62" class="t s" style="left:2552.80px;top:512.58px;line-height:31px;font-size:24.00px;color:#3f4644;letter-spacing:0.957px;-webkit-text-stroke:0.45px #3f4644;">Properties</span><svg style="position:absolute;left:2702.00px;top:517.00px;overflow:visible;" width="24.00" height="18.00" viewBox="0 0 24 18"><path d="M1.5,1 L10,9 L1.5,17 M13,1 L21.5,9 L13,17" fill="none" stroke="#5a615f" stroke-width="2.4"/></svg><div style="position:absolute;left:1688px;top:560px;width:893.3px;height:39.6px;border-radius:20px;background:#deecea"></div><span id="t63" class="t s" style="left:1745.00px;top:564.58px;line-height:31px;font-size:24.00px;color:#3f4644;letter-spacing:0.431px;">Filter</span><span id="t64" class="t s" style="left:2595.00px;top:566.55px;line-height:28px;font-size:21.50px;font-weight:700;color:#3f4644;letter-spacing:-1.797px;">:hov</span><span id="t65" class="t s" style="left:2653.30px;top:566.55px;line-height:28px;font-size:21.50px;font-weight:700;color:#3f4644;letter-spacing:0.542px;">.cls</span><div style="position:absolute;left:1678.00px;top:605.80px;width:1198.00px;height:2.00px;background:#a6eee2;"></div><span id="t66" class="t m" style="left:1686.40px;top:612.13px;line-height:29px;font-size:22.00px;color:#1f1f1f;"><span style="color:#5f6664">element.style</span> {</span><span id="t67" class="t m" style="left:1686.40px;top:640.13px;line-height:29px;font-size:22.00px;color:#1f1f1f;">}</span><div style="position:absolute;left:1678.00px;top:677.00px;width:1198.00px;height:2.00px;background:#a6eee2;"></div><div style="position:absolute;left:1682px;top:682px;width:325px;height:28.4px;background:#fbfdfc;box-shadow:0 1px 4px rgba(0,0,0,.38)"></div><div style="position:absolute;left:1686.00px;top:683.40px;width:318.00px;height:24.20px;background:#2f6a62;"></div><span id="t68" class="t m" style="left:1686.40px;top:683.38px;line-height:29px;font-size:22.00px;color:#ffffff;">.ty-mainbox-simple-title</span><span id="t69" class="t m" style="left:2017.50px;top:683.38px;line-height:29px;font-size:22.00px;color:#1f1f1f;">{</span><span id="t70" class="t m" style="left:2563.80px;top:687.13px;line-height:29px;font-size:22.00px;color:#1f1f1f;text-decoration:underline;text-decoration-color:#9aa09e;text-underline-offset:3px;text-decoration-thickness:1.6px;">standalone.…1280520:189</span><span id="t71" class="t m" style="left:2563.80px;top:785.93px;line-height:29px;font-size:22.00px;color:#1f1f1f;text-decoration:underline;text-decoration-color:#9aa09e;text-underline-offset:3px;text-decoration-thickness:1.6px;">standalone.…1280520:189</span><span id="t72" class="t m" style="left:2563.80px;top:997.13px;line-height:29px;font-size:22.00px;color:#1f1f1f;text-decoration:underline;text-decoration-color:#9aa09e;text-underline-offset:3px;text-decoration-thickness:1.6px;">standalone.…1280520:189</span><span id="t73" class="t m" style="left:2563.80px;top:1123.43px;line-height:29px;font-size:22.00px;color:#1f1f1f;text-decoration:underline;text-decoration-color:#9aa09e;text-underline-offset:3px;text-decoration-thickness:1.6px;">standalone.…1280520:189</span><div style="position:absolute;left:1687px;top:716.2px;width:26px;height:25.6px;border-radius:4.5px;background:#3d8577"></div><span id="t74" class="t m" style="left:1723.00px;top:713.93px;line-height:29px;font-size:22.00px;color:#1f1f1f;"><span style="color:#c8372d">margin-bottom</span>: 10px;</span><span id="t75" class="t m" style="left:1686.40px;top:739.83px;line-height:29px;font-size:22.00px;color:#1f1f1f;">}</span><div style="position:absolute;left:1678.00px;top:775.80px;width:1198.00px;height:2.00px;background:#a6eee2;"></div><span id="t76" class="t m" style="left:1686.40px;top:781.38px;line-height:29px;font-size:22.00px;color:#1f1f1f;"><span style="color:#5f6664">h1, </span>h2 {</span><span id="t77" class="t m" style="left:1723.00px;top:813.38px;line-height:29px;font-size:22.00px;color:#1f1f1f;"><span style="color:#c8372d">text-decoration</span>:</span><svg style="position:absolute;left:1946.40px;top:820.40px;overflow:visible;" width="11.00" height="13.60" viewBox="0 0 11 13.6"><polygon points="0,0 11,6.8 0,13.6" fill="#3f4644"/></svg><span id="t78" class="t m" style="left:1969.50px;top:813.38px;line-height:29px;font-size:22.00px;color:#1f1f1f;">none;</span><span id="t79" class="t m" style="left:1723.00px;top:840.93px;line-height:29px;font-size:22.00px;color:#1f1f1f;"><span style="color:#c8372d">font-weight</span>: bold;</span><span id="t80" class="t m" style="left:1723.00px;top:868.93px;line-height:29px;font-size:22.00px;color:#1f1f1f;"><span style="color:#c8372d">font-style</span>: normal;</span><span id="t81" class="t m" style="left:1723.00px;top:897.13px;line-height:29px;font-size:22.00px;color:#1f1f1f;"><span style="color:#c8372d">font-size</span>: 24px;</span><span id="t82" class="t m" style="left:1723.00px;top:925.13px;line-height:29px;font-size:22.00px;color:#1f1f1f;"><span style="color:#c8372d">font-family</span>: 'Open Sans', 'Helvetica Neue', -apple-system, sans-serif;</span><span id="t83" class="t m" style="left:1686.40px;top:952.23px;line-height:29px;font-size:22.00px;color:#1f1f1f;">}</span><div style="position:absolute;left:1678.00px;top:986.60px;width:1198.00px;height:2.00px;background:#a6eee2;"></div><span id="t84" class="t m" style="left:1686.40px;top:992.13px;line-height:29px;font-size:22.00px;color:#1f1f1f;"><span style="color:#5f6664">h1, </span>h2<span style="color:#5f6664">, h3, h4, h5, h6</span> {</span><span id="t85" class="t m" style="left:1723.00px;top:1024.63px;line-height:29px;font-size:22.00px;color:#1f1f1f;"><span style="color:#c8372d">margin</span>:</span><svg style="position:absolute;left:1826.40px;top:1031.60px;overflow:visible;" width="11.00" height="13.60" viewBox="0 0 11 13.6"><polygon points="0,0 11,6.8 0,13.6" fill="#3f4644"/></svg><span id="t86" class="t m" style="left:1850.00px;top:1024.63px;line-height:29px;font-size:22.00px;color:#1f1f1f;">0 0 15px 0;</span><span id="t87" class="t m" style="left:1723.00px;top:1052.63px;line-height:29px;font-size:22.00px;color:#1f1f1f;"><span style="color:#c8372d">color</span>:</span><div style="position:absolute;left:1820px;top:1055px;width:19.6px;height:19.6px;background:#2e3a47;border:1.6px solid #b9bdbc;box-sizing:border-box"></div><span id="t88" class="t m" style="left:1846.00px;top:1052.63px;line-height:29px;font-size:22.00px;color:#1f1f1f;">#2e3a47;</span><span id="t89" class="t m" style="left:1686.40px;top:1079.23px;line-height:29px;font-size:22.00px;color:#1f1f1f;">}</span><div style="position:absolute;left:1678.00px;top:1114.00px;width:1198.00px;height:2.00px;background:#a6eee2;"></div><span id="t90" class="t m" style="left:1686.40px;top:1119.63px;line-height:29px;font-size:22.00px;color:#1f1f1f;">* {</span><div style="position:absolute;left:1678.00px;top:1150.00px;width:1198.00px;height:52.60px;background:#deecea;"></div><div style="position:absolute;left:1678.00px;top:1148.60px;width:1198.00px;height:2.00px;background:#a6eee2;"></div><div style="position:absolute;left:1678.00px;top:1201.80px;width:1198.00px;height:2.00px;background:#a6eee2;"></div><span id="t91" class="t s" style="left:1755.00px;top:1162.58px;line-height:31px;font-size:24.00px;color:#27695e;letter-spacing:0.656px;-webkit-text-stroke:0.45px #27695e;">Console</span><div style="position:absolute;left:1733.8px;top:1199.4px;width:134.2px;height:4px;background:#27695e;border-radius:4px 4px 0 0"></div><span id="t92" class="t s" style="left:1888.80px;top:1162.58px;line-height:31px;font-size:24.00px;color:#3f4644;letter-spacing:0.705px;-webkit-text-stroke:0.45px #3f4644;">AI assistance</span><div style="position:absolute;left:1802.00px;top:1214.00px;width:2.00px;height:31.00px;background:#a6eee2;"></div><span id="t93" class="t s" style="left:1828.80px;top:1214.58px;line-height:31px;font-size:24.00px;color:#3f4644;letter-spacing:0.812px;">top</span><div style="position:absolute;left:1912.80px;top:1214.00px;width:2.00px;height:31.00px;background:#a6eee2;"></div><div style="position:absolute;left:1986.60px;top:1214.00px;width:2.00px;height:31.00px;background:#a6eee2;"></div><div style="position:absolute;left:2002.5px;top:1210px;width:311.5px;height:39.6px;border-radius:20px;background:#deecea"></div><span id="t94" class="t s" style="left:2060.00px;top:1214.58px;line-height:31px;font-size:24.00px;color:#3f4644;letter-spacing:0.431px;">Filter</span><div style="position:absolute;left:2323.8px;top:1210px;width:200.8px;height:39.6px;border-radius:8px;background:#e9efed"></div><span id="t95" class="t s" style="left:2337.00px;top:1214.58px;line-height:31px;font-size:24.00px;color:#9aa3a0;letter-spacing:0.494px;">Default levels</span><div style="position:absolute;left:2536.60px;top:1214.00px;width:2.00px;height:31.00px;background:#a6eee2;"></div><span id="t96" class="t s" style="left:2563.30px;top:1214.58px;line-height:31px;font-size:24.00px;color:#3f4644;letter-spacing:0.595px;">230 Issues:</span><span id="t97" class="t s" style="left:2737.50px;top:1214.58px;line-height:31px;font-size:24.00px;color:#3f4644;letter-spacing:1.627px;">230</span><div style="position:absolute;left:2801.60px;top:1214.00px;width:2.00px;height:31.00px;background:#a6eee2;"></div><div style="position:absolute;left:1678.00px;top:1255.90px;width:1198.00px;height:2.00px;background:#a6eee2;"></div><div style="position:absolute;left:1927.80px;top:1257.00px;width:2.00px;height:291.00px;background:#a6eee2;"></div><div style="position:absolute;left:1678px;top:1270px;width:241.6px;height:44px;border-radius:0 22px 22px 0;background:#eef2f0"></div><span id="t98" class="t s" style="left:1782.60px;top:1276.98px;line-height:31px;font-size:24.00px;color:#1f1f1f;letter-spacing:-0.220px;">6 messag…</span><span id="t99" class="t s" style="left:1782.60px;top:1320.93px;line-height:31px;font-size:24.00px;color:#1f1f1f;letter-spacing:-0.338px;">No user …</span><span id="t100" class="t s" style="left:1782.60px;top:1364.88px;line-height:31px;font-size:24.00px;color:#1f1f1f;letter-spacing:0.559px;">No errors</span><span id="t101" class="t s" style="left:1782.60px;top:1408.83px;line-height:31px;font-size:24.00px;color:#1f1f1f;letter-spacing:0.715px;">6 warnings</span><span id="t102" class="t s" style="left:1782.60px;top:1452.78px;line-height:31px;font-size:24.00px;color:#1f1f1f;letter-spacing:0.492px;">No info</span><span id="t103" class="t s" style="left:1782.60px;top:1496.73px;line-height:31px;font-size:24.00px;color:#1f1f1f;letter-spacing:0.530px;">No verbose</span><span id="t104" class="t m" style="left:1981.20px;top:1271.63px;line-height:29px;font-size:22.00px;color:#b4bab8;">Expression</span><span id="t105" class="t m" style="left:1978.80px;top:1310.23px;line-height:29px;font-size:22.00px;color:#1f1f1f;">not available</span><div style="position:absolute;left:1929.60px;top:1348.60px;width:946.40px;height:2.00px;background:#a6eee2;"></div><span id="t106" class="t m" style="left:1981.20px;top:1364.23px;line-height:29px;font-size:22.00px;color:#b4bab8;">Expression</span><div style="position:absolute;left:1938px;top:1402.4px;width:929.8px;height:60.2px;border-radius:0 0 10px 10px;background:#fdf3d8;overflow:hidden"><span id="t107" class="t m" style="left:48.80px;top:-19.97px;line-height:29px;font-size:22.00px;color:#3a2c05;">resource was preloaded using link preload but not used within a few</span></div><span id="t108" class="t m" style="left:1986.80px;top:1408.43px;line-height:29px;font-size:22.00px;color:#3a2c05;">seconds from the window's load event. Please make sure it has</span><span id="t109" class="t m" style="left:1986.80px;top:1434.23px;line-height:29px;font-size:22.00px;color:#3a2c05;">an appropriate `as` value and it is preloaded intentionally.</span><div style="position:absolute;left:1929.60px;top:1401.20px;width:946.40px;height:2.00px;background:#a6eee2;"></div><svg style="position:absolute;left:0;top:0;pointer-events:none" width="2876" height="1548" viewBox="0 0 2876 1548"><path d="M1712,5 H1699.5 a2.2,2.2 0 0 0 -2.2,2.2 V28 a2.2,2.2 0 0 0 2.2,2.2 H1706" fill="none" stroke="#3f4644" stroke-width="2.5" stroke-dasharray="3.6 3"/><path d="M1722.6,5 V12" fill="none" stroke="#3f4644" stroke-width="2.5" stroke-dasharray="3.6 3"/><path d="M1723,30.6 L1710.4,18 M1710,29 V17.6 H1721.4" fill="none" stroke="#3f4644" stroke-width="2.6"/><path d="M1757.5,27.8 V9.6 a2.2,2.2 0 0 1 2.2,-2.2 H1781" fill="none" stroke="#3f4644" stroke-width="2.6"/><rect x="1750.4" y="25.6" width="16.6" height="3.6" fill="#3f4644"/><rect x="1772" y="13" width="9" height="15.2" rx="1.6" fill="none" stroke="#3f4644" stroke-width="2.6"/><path d="M2533.6,9.6 L2546.2,30 H2521 Z" fill="#e0713a" stroke="#e0713a" stroke-width="1.2" stroke-linejoin="round"/><rect x="2532.3" y="16.6" width="2.6" height="7" fill="#fff"/><rect x="2532.3" y="25" width="2.6" height="2.6" fill="#fff"/><path d="M2596.4,10.4 h15.7 a2.4,2.4 0 0 1 2.4,2.4 v11.2 a2.4,2.4 0 0 1 -2.4,2.4 h-11.1 l-4.6,4 v-17.4 a2.4,2.4 0 0 1 2.4,-2.4 z" fill="#e0713a"/><rect x="2602.9" y="13.0" width="2.6" height="7" fill="#fff"/><rect x="2602.9" y="21.6" width="2.6" height="2.6" fill="#fff"/><path d="M2738.03,15.78 L2741.50,15.84 L2741.50,20.56 L2738.03,20.62 L2736.65,23.93 L2739.07,26.43 L2735.73,29.77 L2733.23,27.35 L2729.92,28.73 L2729.86,32.20 L2725.14,32.20 L2725.08,28.73 L2721.77,27.35 L2719.27,29.77 L2715.93,26.43 L2718.35,23.93 L2716.97,20.62 L2713.50,20.56 L2713.50,15.84 L2716.97,15.78 L2718.35,12.47 L2715.93,9.97 L2719.27,6.63 L2721.77,9.05 L2725.08,7.67 L2725.14,4.20 L2729.86,4.20 L2729.92,7.67 L2733.23,9.05 L2735.73,6.63 L2739.07,9.97 L2736.65,12.47 Z" fill="none" stroke="#3f4644" stroke-width="2.6" stroke-linejoin="round"/><circle cx="2727.5" cy="18.2" r="4.6" fill="#3f4644"/><circle cx="2783.2" cy="8.0" r="2.9" fill="#3f4644"/><circle cx="2783.2" cy="18.2" r="2.9" fill="#3f4644"/><circle cx="2783.2" cy="28.4" r="2.9" fill="#3f4644"/><path d="M2828.4,9.2 L2846.8,27.6 M2846.8,9.2 L2828.4,27.6" stroke="#3f4644" stroke-width="2.6"/><polygon points="1706,468.4 1697.4,473.8 1706,479.2" fill="#1f1f1f"/><polygon points="2848,468.4 2856.6,473.8 2848,479.2" fill="#8b8f8e"/><path d="M1711.2,572.4 H1728.4 L1721.2,581.4 V589.4 H1718.4 V581.4 Z" fill="none" stroke="#3f4644" stroke-width="2.5" stroke-linejoin="round"/><path d="M2727.6,568.6 V592.4 M2715.8,580.5 H2739.6" stroke="#3f4644" stroke-width="2.6"/><polygon points="2747,589.4 2747,597 2739,597" fill="#3f4644"/><path d="M2773.4,567.6 H2794.4 V582.6 a2.4,2.4 0 0 1 -2.4,2.4 H2775.8 a2.4,2.4 0 0 1 -2.4,-2.4 Z" fill="none" stroke="#3f4644" stroke-width="2.6"/><path d="M2773.4,576.6 H2794.4 M2786,567.6 V573 M2790.4,567.6 V571" stroke="#3f4644" stroke-width="2.4"/><rect x="2780.2" y="585" width="7.4" height="9.6" rx="2.4" fill="#3f4644"/><rect x="2825.2" y="567.6" width="25" height="24.6" rx="2.6" fill="none" stroke="#3f4644" stroke-width="2.6"/><path d="M2842.4,567.6 V592.2" stroke="#3f4644" stroke-width="2.6"/><polygon points="2838,574 2838,586 2830.4,580" fill="#3f4644"/><path d="M1692.6,729 L1698,734.6 L1708,722.6" fill="none" stroke="#fff" stroke-width="3.6"/><circle cx="1710" cy="1166.2" r="2.9" fill="#3f4644"/><circle cx="1710" cy="1176.2" r="2.9" fill="#3f4644"/><circle cx="1710" cy="1186.2" r="2.9" fill="#3f4644"/><path d="M2056,1166.6 H2065 M2057.6,1167 V1174.6 L2052.2,1184.4 a1.6,1.6 0 0 0 1.4,2.4 H2067.4 a1.6,1.6 0 0 0 1.4,-2.4 L2063.4,1174.6 V1167" fill="none" stroke="#3f4644" stroke-width="2.3" stroke-linejoin="round"/><path d="M2834.4,1167.0 L2852.8,1185.4 M2852.8,1167.0 L2834.4,1185.4" stroke="#3f4644" stroke-width="2.6"/><rect x="1697.4" y="1217.4" width="25.2" height="24.6" rx="2.6" fill="none" stroke="#3f4644" stroke-width="2.6"/><path d="M1705.8,1217.4 V1242" stroke="#3f4644" stroke-width="2.6"/><polygon points="1710.6,1229.8 1717.8,1223.8 1717.8,1235.8" fill="#3f4644"/><circle cx="1765.8" cy="1229.8" r="13.4" fill="none" stroke="#3f4644" stroke-width="2.6"/><path d="M1756.4,1239.2 L1775.2,1220.4" stroke="#3f4644" stroke-width="2.6"/><polygon points="1876,1226 1890,1226 1883,1235.6" fill="#3f4644"/><path d="M1934.4,1229.8 Q1950.6,1206.6 1966.8,1229.8 Q1950.6,1253 1934.4,1229.8 Z" fill="none" stroke="#3f4644" stroke-width="2.6" stroke-linejoin="round"/><circle cx="1950.6" cy="1229.8" r="5.4" fill="none" stroke="#3f4644" stroke-width="2.6"/><path d="M2026.2,1221.8 H2043.4 L2036.2,1230.8 V1238.8 H2033.4 V1230.8 Z" fill="none" stroke="#3f4644" stroke-width="2.5" stroke-linejoin="round"/><polygon points="2499.5,1226 2514,1226 2506.8,1235.6" fill="#9aa3a0"/><path d="M2710.2,1219.4 h15.7 a2.4,2.4 0 0 1 2.4,2.4 v11.2 a2.4,2.4 0 0 1 -2.4,2.4 h-11.1 l-4.6,4 v-17.4 a2.4,2.4 0 0 1 2.4,-2.4 z" fill="#e0713a"/><rect x="2716.8" y="1222.0" width="2.6" height="7" fill="#fff"/><rect x="2716.8" y="1230.6" width="2.6" height="2.6" fill="#fff"/><path d="M2847.93,1227.58 L2851.40,1227.64 L2851.40,1232.36 L2847.93,1232.42 L2846.55,1235.73 L2848.97,1238.23 L2845.63,1241.57 L2843.13,1239.15 L2839.82,1240.53 L2839.76,1244.00 L2835.04,1244.00 L2834.98,1240.53 L2831.67,1239.15 L2829.17,1241.57 L2825.83,1238.23 L2828.25,1235.73 L2826.87,1232.42 L2823.40,1232.36 L2823.40,1227.64 L2826.87,1227.58 L2828.25,1224.27 L2825.83,1221.77 L2829.17,1218.43 L2831.67,1220.85 L2834.98,1219.47 L2835.04,1216.00 L2839.76,1216.00 L2839.82,1219.47 L2843.13,1220.85 L2845.63,1218.43 L2848.97,1221.77 L2846.55,1224.27 Z" fill="none" stroke="#3f4644" stroke-width="2.6" stroke-linejoin="round"/><circle cx="2837.4" cy="1230.0" r="4.6" fill="#3f4644"/><polygon points="1707.6,1285.4 1716.2,1292.4 1707.6,1299.4" fill="#3f4644"/><polygon points="1707.6,1418 1716.2,1425 1707.6,1432" fill="#3f4644"/><circle cx="1736.6" cy="1283.6" r="1.9" fill="#3f4644"/><path d="M1742.4,1283.6 H1763.8" stroke="#3f4644" stroke-width="2.6"/><circle cx="1736.6" cy="1292.4" r="1.9" fill="#3f4644"/><path d="M1742.4,1292.4 H1763.8" stroke="#3f4644" stroke-width="2.6"/><circle cx="1736.6" cy="1301.2" r="1.9" fill="#3f4644"/><path d="M1742.4,1301.2 H1763.8" stroke="#3f4644" stroke-width="2.6"/><circle cx="1750" cy="1336" r="14.4" fill="none" stroke="#3f4644" stroke-width="2.6"/><circle cx="1750" cy="1332" r="4.6" fill="none" stroke="#3f4644" stroke-width="2.4"/><path d="M1739.6,1345.8 Q1750,1337 1760.4,1345.8" fill="none" stroke="#3f4644" stroke-width="2.4"/><circle cx="1750" cy="1380" r="14.4" fill="none" stroke="#d23f31" stroke-width="2.6"/><path d="M1743.4,1373.4 L1756.6,1386.6 M1756.6,1373.4 L1743.4,1386.6" stroke="#d23f31" stroke-width="2.6"/><path d="M1750,1411 L1765.4,1438 H1734.6 Z" fill="none" stroke="#e0713a" stroke-width="2.6" stroke-linejoin="round"/><rect x="1748.8" y="1421" width="2.5" height="8" fill="#e0713a"/><rect x="1748.8" y="1431.2" width="2.5" height="2.6" fill="#e0713a"/><circle cx="1750" cy="1468" r="14.4" fill="none" stroke="#2f7f73" stroke-width="2.6"/><rect x="1748.7" y="1466" width="2.6" height="9" fill="#2f7f73"/><rect x="1748.7" y="1460.4" width="2.6" height="2.8" fill="#2f7f73"/><rect x="1742.8" y="1503" width="14.4" height="20.4" rx="7.2" fill="none" stroke="#3f4644" stroke-width="2.5"/><path d="M1738,1507.4 H1742.8 M1757.2,1507.4 H1762 M1738,1513.2 H1742.8 M1757.2,1513.2 H1762 M1738,1519 H1742.8 M1757.2,1519 H1762 M1744.4,1498.8 L1747.6,1502.8 M1755.6,1498.8 L1752.4,1502.8 M1747.4,1510.6 H1752.6 M1747.4,1515.8 H1752.6" stroke="#3f4644" stroke-width="2.3"/><path d="M1947.0,1276.8 L1964.6,1294.4 M1964.6,1276.8 L1947.0,1294.4" stroke="#3f4644" stroke-width="2.6"/><path d="M1947.0,1369.6 L1964.6,1387.2 M1964.6,1369.6 L1947.0,1387.2" stroke="#3f4644" stroke-width="2.6"/><path d="M1956,1483.4 L1964,1491 L1956,1498.6" fill="none" stroke="#2f7f73" stroke-width="2.6"/></svg><div style="position:absolute;left:1676.00px;top:0.00px;width:2.20px;height:1548.00px;background:#a6eee2;"></div><svg style="position:absolute;left:0;top:0;pointer-events:none" width="2876" height="1548" viewBox="0 0 2876 1548"><line x1="1260.0" y1="843.0" x2="1645.2" y2="703.8" stroke="#f09a38" stroke-width="4.6"/><polygon points="1664.0,697.0 1641.9,718.3 1643.8,704.3 1633.4,694.8" fill="#f09a38"/></svg></body></html>
